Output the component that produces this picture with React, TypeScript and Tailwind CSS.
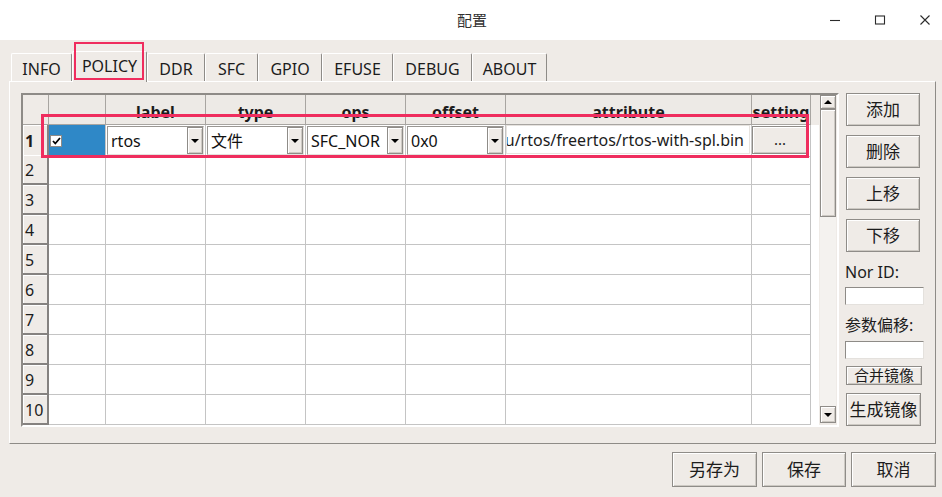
import React from 'react';

const tabs = [
  { label: 'INFO', w: 'w-[61px]' },
  { label: 'POLICY', w: 'w-[75px]', active: true },
  { label: 'DDR', w: 'w-[58px]' },
  { label: 'SFC', w: 'w-[53px]' },
  { label: 'GPIO', w: 'w-[64px]' },
  { label: 'EFUSE', w: 'w-[71px]' },
  { label: 'DEBUG', w: 'w-[79px]' },
  { label: 'ABOUT', w: 'w-[75px]' },
];

const columns = ['', 'label', 'type', 'ops', 'offset', 'attribute', 'setting'];

const bevel =
  'bg-[#efebe7] border border-[#8f8c88] shadow-[inset_1px_1px_0_#ffffff,inset_-1px_-1px_0_#cdc9c3]';

function Button({ children, className }: { children: React.ReactNode; className: string }) {
  return (
    <div className={`flex items-center justify-center text-[17px] text-[#1c1c1c] ${bevel} ${className}`}>
      {children}
    </div>
  );
}

function ArrowDown() {
  return <div className="w-0 h-0 border-x-[4px] border-x-transparent border-t-[4px] border-t-black" />;
}

function ArrowUp() {
  return <div className="w-0 h-0 border-x-[4px] border-x-transparent border-b-[4px] border-b-black" />;
}

function Combo({ value }: { value: string }) {
  return (
    <div className="flex h-[29px] m-px bg-white border border-t-[#9a9793] border-l-[#9a9793] border-b-[#e4e1dd] border-r-[#e4e1dd]">
      <div className="flex-1 flex items-center pl-[3px] text-[16px] text-[#111] whitespace-nowrap overflow-hidden">
        {value}
      </div>
      <div className={`w-[16px] flex items-center justify-center ${bevel}`}>
        <ArrowDown />
      </div>
    </div>
  );
}

function WindowControls() {
  return (
    <div className="flex items-center justify-end gap-[33px] pr-[11px]">
      <svg width="12" height="12" viewBox="0 0 12 12">
        <path d="M1 6.5h10" stroke="#2b2b2b" strokeWidth="1.1" />
      </svg>
      <svg width="12" height="12" viewBox="0 0 12 12">
        <rect x="1.5" y="2" width="9" height="8" fill="none" stroke="#2b2b2b" strokeWidth="1.1" />
      </svg>
      <svg width="12" height="12" viewBox="0 0 12 12">
        <path d="M1.5 1.5l9 9M10.5 1.5l-9 9" stroke="#2b2b2b" strokeWidth="1.1" />
      </svg>
    </div>
  );
}

export default function App() {
  const rows = Array.from({ length: 10 }, (_, i) => i + 1);
  const gridCols = 'grid-cols-[26px_57px_100px_100px_100px_100px_246px_59px_1fr]';

  return (
    <div className="relative w-[942px] h-[497px] overflow-hidden bg-[#efebe7] font-['Noto_Sans','Noto_Sans_CJK_SC',sans-serif] text-[#1c1c1c]">
      {/* title bar */}
      <div className="h-[40px] bg-white grid grid-cols-[1fr_auto_1fr] items-center">
        <div />
        <div className="text-[15px] text-[#303030] pl-[2px]">配置</div>
        <WindowControls />
      </div>

      {/* tabs */}
      <div className="h-[41px] flex items-end pl-[11px]">
        {tabs.map((t) =>
          t.active ? (
            <div
              key={t.label}
              className={`${t.w} h-[31px] -mb-px relative z-10 bg-[#efebe7] border-t border-l border-white border-r border-r-[#8e8b87] rounded-t-[2px] flex items-center justify-center text-[16px] pb-[2px]`}
            >
              {t.label}
            </div>
          ) : (
            <div
              key={t.label}
              className={`${t.w} h-[28px] bg-[#efebe7] border-t border-l border-white border-r border-r-[#8e8b87] rounded-t-[2px] flex items-center justify-center text-[16px] pt-[3px]`}
            >
              {t.label}
            </div>
          )
        )}
      </div>

      {/* tab panel */}
      <div className="ml-[9px] w-[927px] h-[363px] border border-t-white border-l-white border-r-[#8e8b87] border-b-[#8e8b87] pl-[11px] pt-[11px] flex">
        {/* table frame */}
        <div className="w-[818px] h-[334px] border-2 border-t-[#8e8b87] border-l-[#8e8b87] border-r-white border-b-white flex bg-white">
          <div className="flex-1 flex flex-col">
            {/* header */}
            <div className={`grid ${gridCols} h-[30px]`}>
              <div className="bg-[#efebe7] border-r border-b border-[#a8a5a1]" />
              {columns.map((c) => (
                <div
                  key={c}
                  className="bg-[#edeae6] border-r border-b border-[#a8a5a1] flex items-center justify-center pt-[4px] text-[16px] font-bold whitespace-nowrap overflow-hidden"
                >
                  {c}
                </div>
              ))}
              <div className="bg-[#efebe7]" />
            </div>
            {rows.map((r) => (
              <div key={r} className={`grid ${gridCols} h-[30px]`}>
                <div
                  className={`bg-[#efebe7] border-r-2 border-b-2 border-[#858280] shadow-[inset_1px_1px_0_#ffffff] flex items-center pl-[2px] pt-[2px] text-[16px] ${
                    r === 1 ? 'font-bold' : ''
                  }`}
                >
                  {r}
                </div>
                {r === 1 ? (
                  <>
                    <div className="bg-[#2f88c7] border-r border-b border-[#c4c4c4] flex items-center pl-px">
                      <div className="w-[12px] h-[12px] bg-white border border-[#8e8b87] flex items-center justify-center">
                        <svg width="9" height="8" viewBox="0 0 9 8">
                          <path d="M1 4l2.3 2.5L8 1" fill="none" stroke="#000" strokeWidth="1.8" />
                        </svg>
                      </div>
                    </div>
                    <div className="border-r border-b border-[#c4c4c4]">
                      <Combo value="rtos" />
                    </div>
                    <div className="border-r border-b border-[#c4c4c4]">
                      <Combo value="文件" />
                    </div>
                    <div className="border-r border-b border-[#c4c4c4]">
                      <Combo value="SFC_NOR" />
                    </div>
                    <div className="border-r border-b border-[#c4c4c4]">
                      <Combo value="0x0" />
                    </div>
                    <div className="border-r border-b border-[#c4c4c4]">
                      <div className="h-[29px] mr-px flex items-center justify-end overflow-hidden whitespace-nowrap bg-white border border-[#e6e3df] pr-[5px] text-[16px]">
                        u/rtos/freertos/rtos-with-spl.bin
                      </div>
                    </div>
                    <div className="border-r border-b border-[#c4c4c4] pr-[2px] pt-px pb-[2px]">
                      <div className={`h-full flex items-end justify-center pb-[3px] text-[15px] ${bevel}`}>...</div>
                    </div>
                    <div />
                  </>
                ) : (
                  <>
                    {columns.map((c) => (
                      <div key={c} className="border-r border-b border-[#c4c4c4]" />
                    ))}
                    <div />
                  </>
                )}
              </div>
            ))}
          </div>
          {/* scrollbar */}
          <div className="w-[18px] bg-[#efebe7] flex flex-col pl-px pr-px">
            <div className="flex-1 flex flex-col bg-[#f4f2ef]">
              <div className={`h-[14px] flex items-center justify-center ${bevel}`}>
                <ArrowUp />
              </div>
              <div className={`h-[108px] ${bevel}`} />
              <div className="flex-1" />
              <div className={`h-[17px] flex items-center justify-center ${bevel}`}>
                <ArrowDown />
              </div>
            </div>
            <div className="h-[2px]" />
          </div>
        </div>

        {/* right column */}
        <div className="ml-[6px] w-[80px] flex flex-col">
          <Button className="ml-px w-[74px] h-[33px]">添加</Button>
          <Button className="ml-px w-[74px] h-[33px] mt-[9px]">删除</Button>
          <Button className="ml-px w-[74px] h-[33px] mt-[9px]">上移</Button>
          <Button className="ml-px w-[74px] h-[33px] mt-[9px]">下移</Button>
          <div className="mt-[8px] h-[24px] leading-[24px] text-[16px] whitespace-nowrap">Nor ID:</div>
          <div className="mt-[3px] h-[18px] w-[79px] bg-white border border-t-[#8e8b87] border-l-[#8e8b87] border-r-[#e4e1dd] border-b-[#e4e1dd]" />
          <div className="mt-[8px] h-[24px] leading-[24px] text-[16px] whitespace-nowrap">参数偏移:</div>
          <div className="mt-[4px] h-[18px] w-[79px] bg-white border border-t-[#8e8b87] border-l-[#8e8b87] border-r-[#e4e1dd] border-b-[#e4e1dd]" />
          <div className={`ml-px mt-[7px] w-[76px] h-[19px] flex items-center justify-center text-[15px] leading-[17px] ${bevel}`}>
            合并镜像
          </div>
          <Button className="ml-px w-[75px] h-[33px] mt-[8px]">生成镜像</Button>
        </div>
      </div>

      {/* bottom buttons */}
      <div className="flex justify-end gap-[5px] pt-[8px] pr-[6px]">
        <Button className="w-[85px] h-[35px]">另存为</Button>
        <Button className="w-[84px] h-[35px]">保存</Button>
        <Button className="w-[85px] h-[35px]">取消</Button>
      </div>

      {/* annotation highlights */}
      <div className="absolute z-20 left-[74px] top-[42px] w-[70px] h-[38px] border-2 border-[#ef2d5e] pointer-events-none" />
      <div className="absolute z-20 left-[41px] top-[114px] w-[768px] h-[44px] border-[3px] border-[#ef2d5e] pointer-events-none" />
    </div>
  );
}
